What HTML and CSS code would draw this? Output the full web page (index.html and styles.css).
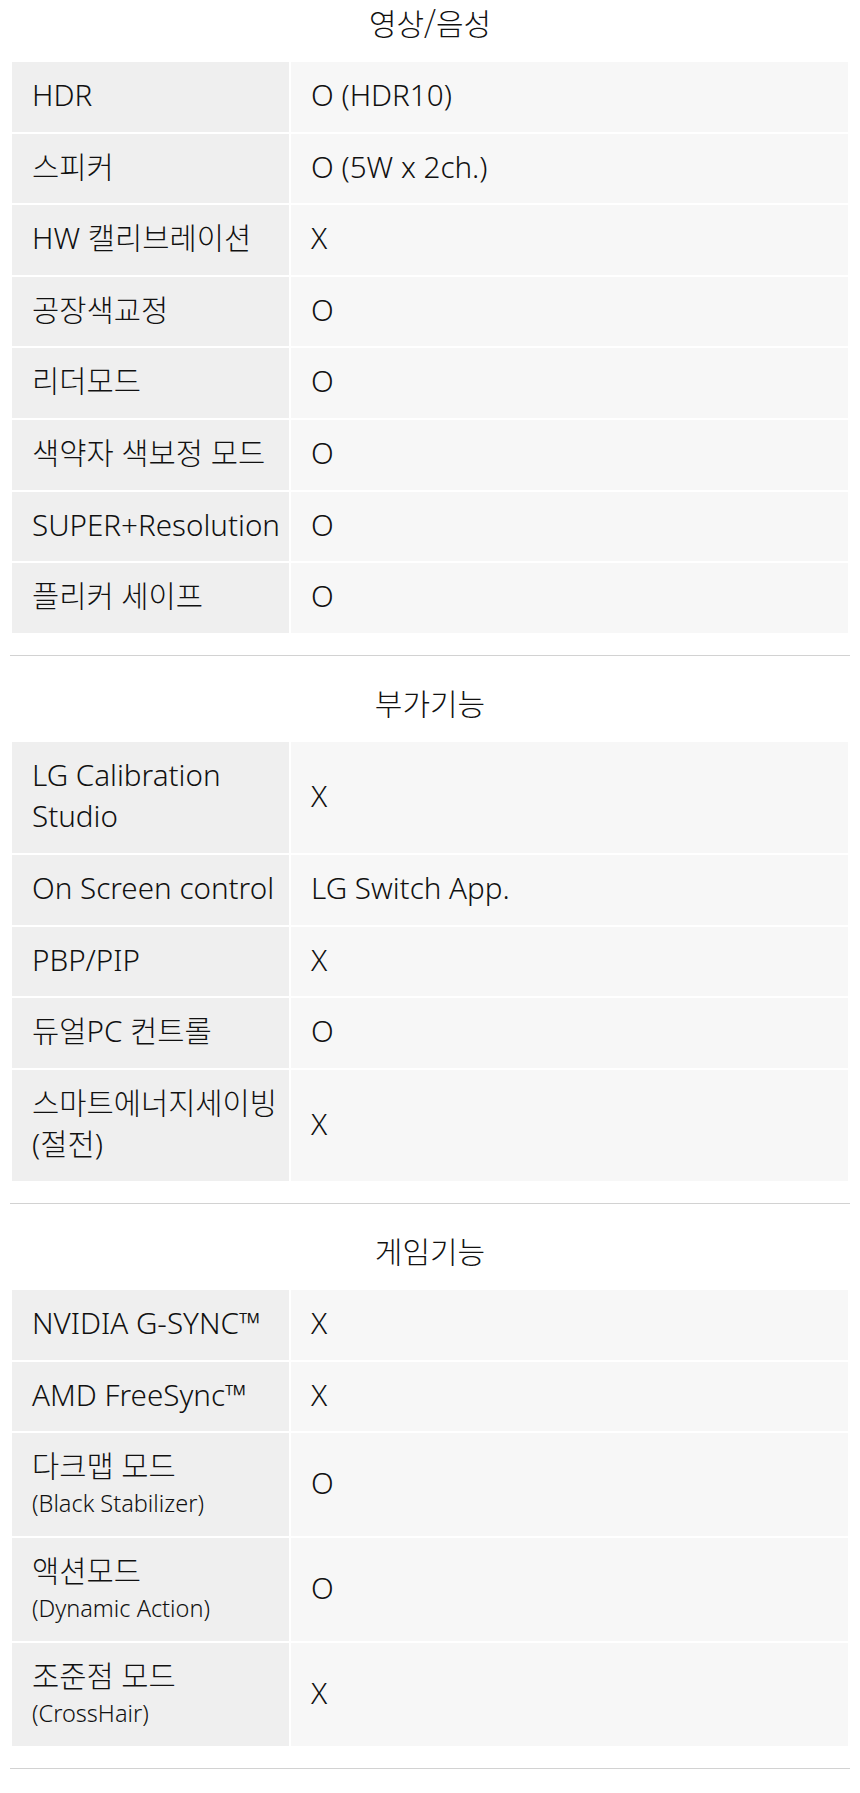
FILE: index.html
```html
<!DOCTYPE html>
<html lang="ko">
<head>
<meta charset="utf-8">
<title>스펙</title>
<link rel="stylesheet" href="styles.css">
</head>
<body>
<div class="specs">
  <section class="spec">
    <h3 class="spec-title">영상/음성</h3>
    <table class="spec-table">
      <tr><th>HDR</th><td>O (HDR10)</td></tr>
      <tr><th>스피커</th><td>O (5W x 2ch.)</td></tr>
      <tr><th>HW 캘리브레이션</th><td>X</td></tr>
      <tr><th>공장색교정</th><td>O</td></tr>
      <tr><th>리더모드</th><td>O</td></tr>
      <tr><th>색약자 색보정 모드</th><td>O</td></tr>
      <tr><th>SUPER+Resolution</th><td>O</td></tr>
      <tr><th>플리커 세이프</th><td>O</td></tr>
    </table>
  </section>
  <section class="spec">
    <h3 class="spec-title">부가기능</h3>
    <table class="spec-table">
      <tr><th>LG Calibration Studio</th><td>X</td></tr>
      <tr><th>On Screen control</th><td>LG Switch App.</td></tr>
      <tr><th>PBP/PIP</th><td>X</td></tr>
      <tr><th>듀얼PC 컨트롤</th><td>O</td></tr>
      <tr><th>스마트에너지세이빙 (절전)</th><td>X</td></tr>
    </table>
  </section>
  <section class="spec">
    <h3 class="spec-title">게임기능</h3>
    <table class="spec-table">
      <tr><th>NVIDIA G-SYNC™</th><td>X</td></tr>
      <tr><th>AMD FreeSync™</th><td>X</td></tr>
      <tr><th>다크맵 모드<span class="sub">(Black Stabilizer)</span></th><td>O</td></tr>
      <tr><th>액션모드<span class="sub">(Dynamic Action)</span></th><td>O</td></tr>
      <tr><th>조준점 모드<span class="sub">(CrossHair)</span></th><td>X</td></tr>
    </table>
  </section>
</div>
</body>
</html>
```

FILE: styles.css
```css
html, body {
  margin: 0;
  padding: 0;
  background: #fff;
}

body {
  font-family: "Noto Sans", "Noto Sans CJK KR", sans-serif;
  color: #111;
}

.specs {
  margin: 0 10px;
}

.spec {
  border-bottom: 1px solid #d2d2d2;
  padding-bottom: 20px;
}

.spec + .spec {
  padding-top: 24px;
}

.spec-title {
  margin: 0 0 16px;
  font-family: "Noto Sans CJK KR", "Noto Sans", sans-serif;
  font-size: 30px;
  font-weight: 300;
  line-height: 44px;
  text-align: center;
  color: #111;
}

.spec-table {
  width: 100%;
  border-collapse: separate;
  border-spacing: 2px;
  table-layout: fixed;
}

.spec-table th,
.spec-table td {
  font-size: 29.6px;
  font-weight: 300;
  line-height: 41.6px;
  text-align: left;
  vertical-align: middle;
}

.spec-table th {
  width: 255px;
  padding: 12px 2px 16px 20px;
  background: #efefef;
}

.spec-table td {
  padding: 12px 20px 16px;
  background: #f7f7f7;
}

.sub {
  display: block;
  font-size: 23.5px;
  line-height: 33.4px;
}
```
